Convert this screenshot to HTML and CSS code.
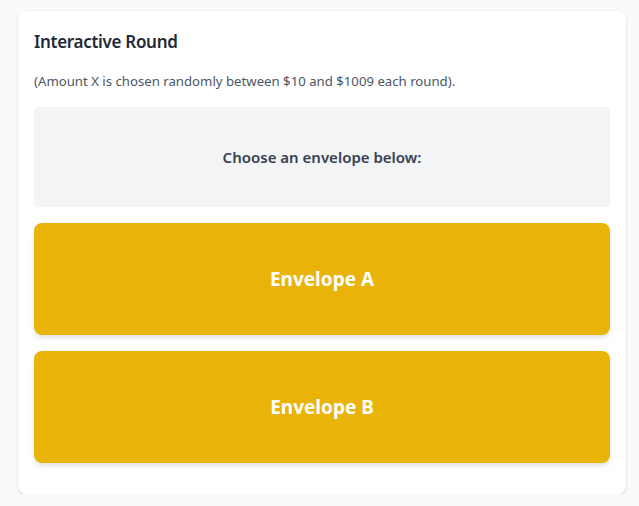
FILE: index.html
```html
<!DOCTYPE html>
<html>
<head>
<meta charset="utf-8">
<link rel="stylesheet" href="styles.css">
</head>
<body>
<div class="card">
  <h2 class="title">Interactive Round</h2>
  <p class="note">(Amount X is chosen randomly between $10 and $1009 each round).</p>
  <div class="prompt">Choose an envelope below:</div>
  <div class="envelopes">
    <button class="envelope">Envelope A</button>
    <button class="envelope">Envelope B</button>
  </div>
</div>
</body>
</html>
```
FILE: styles.css
```css
html, body {
  margin: 0;
  padding: 0;
  background: #f9fafb;
  font-family: "Noto Sans", "Open Sans", sans-serif;
}
body {
  padding: 11px 13px 0 18px;
}
.card {
  background: #fff;
  border-radius: 8px;
  box-shadow: 0 1px 3px rgba(0,0,0,0.12), 0 1px 2px rgba(0,0,0,0.06);
  padding: 16px 16px 31px 16px;
}
.title {
  margin: 0;
  font-size: 17px;
  font-weight: 600;
  letter-spacing: -0.3px;
  color: #1f2937;
  line-height: 30px;
}
.note {
  margin: 14px 0 0 0;
  font-size: 13.2px;
  color: #4b5563;
  line-height: 20px;
}
.prompt {
  margin-top: 16px;
  height: 100px;
  background: #f3f4f6;
  border-radius: 4px;
  display: flex;
  align-items: center;
  justify-content: center;
  font-size: 15px;
  font-weight: 600;
  color: #374151;
}
.envelopes {
  margin-top: 16px;
  display: flex;
  flex-direction: column;
  gap: 16px;
}
.envelope {
  height: 112px;
  border: none;
  border-radius: 8px;
  background: #eab308;
  color: #fff;
  font-family: inherit;
  font-size: 19px;
  font-weight: 700;
  box-shadow: 0 4px 6px -1px rgba(0,0,0,0.1), 0 2px 4px -1px rgba(0,0,0,0.06);
  cursor: pointer;
}
```
